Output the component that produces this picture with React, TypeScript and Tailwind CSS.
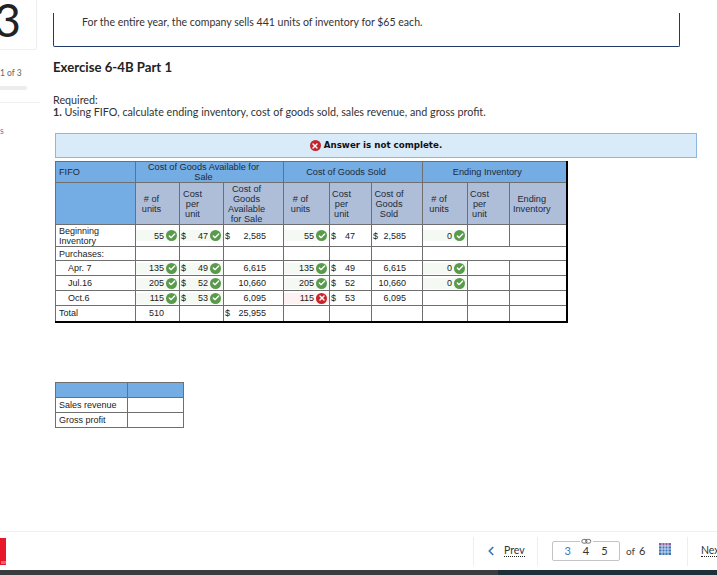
import { Check, X, ChevronLeft } from 'lucide-react';

const th = 'border border-[#6f6f6f] font-normal text-center leading-[10px] align-middle p-0';
const td = 'border border-[#6f6f6f] p-0 align-middle text-[#222] leading-[10px] text-[9px]';
const heavy = 'border-l-black';

function Ok() {
  return (
    <span className="inline-flex h-[11px] w-[11px] shrink-0 items-center justify-center rounded-full bg-[#5a9a4c]">
      <Check className="h-[8px] w-[8px] text-white" strokeWidth={4} />
    </span>
  );
}

function Bad() {
  return (
    <span className="inline-flex h-[11px] w-[11px] shrink-0 items-center justify-center rounded-full bg-[#c5242c]">
      <X className="h-[8px] w-[8px] text-white" strokeWidth={4} />
    </span>
  );
}

function Units({ n, bad }: { n: string; bad?: boolean }) {
  return (
    <div className={`flex h-full items-center justify-end gap-[2px] pr-[2px] ${bad ? 'bg-[#fdf1f1]' : 'bg-[#f5f9f3]'}`}>
      <span>{n}</span>
      {bad ? <Bad /> : <Ok />}
    </div>
  );
}

function Cost({ n, ok }: { n: string; ok?: boolean }) {
  return (
    <div className={`flex h-full items-center gap-[2px] pl-[1px] pr-[2px] ${ok ? 'bg-[#f5f9f3]' : ''}`}>
      <span>$</span>
      <span className={ok ? 'ml-auto' : 'ml-[7px]'}>{n}</span>
      {ok && <Ok />}
    </div>
  );
}

function Money({ n, dollar }: { n: string; dollar?: boolean }) {
  return (
    <div className="flex items-center pl-[1px] pr-[17px]">
      {dollar && <span>$</span>}
      <span className="ml-auto">{n}</span>
    </div>
  );
}

const rows = [
  { label: 'Apr. 7', n: '135', c: '49', v: '6,615', end: true },
  { label: 'Jul.16', n: '205', c: '52', v: '10,660', end: true },
  { label: 'Oct.6', n: '115', c: '53', v: '6,095', end: false },
];

function FifoTable() {
  return (
    <table className="ml-[2px] mt-[3px] w-[511px] table-fixed border-collapse border-b-2 border-r-2 border-b-black border-r-black font-['Liberation_Sans',sans-serif] text-[9.2px] text-[#222]">
      <colgroup>
        <col className="w-[80px]" />
        <col className="w-[44px]" />
        <col className="w-[44px]" />
        <col className="w-[60px]" />
        <col className="w-[46px]" />
        <col className="w-[42px]" />
        <col className="w-[51px]" />
        <col className="w-[45px]" />
        <col className="w-[42px]" />
        <col className="w-[57px]" />
      </colgroup>
      <thead>
        <tr className="h-[20px] bg-[#74ace4] text-[#1f2a36]">
          <th className={`${th} pl-[3px] text-left`}>FIFO</th>
          <th colSpan={3} className={`${th} ${heavy} pl-[8px] pr-[20px]`}>Cost of Goods Available for Sale</th>
          <th colSpan={3} className={`${th} ${heavy} pr-[14px]`}>Cost of Goods Sold</th>
          <th colSpan={3} className={`${th} ${heavy} pr-[14px]`}>Ending Inventory</th>
        </tr>
        <tr className="h-[42px] bg-[#aebdd8] text-[#1f2a36]">
          <th className={`${th} bg-[#74ace4]`}></th>
          <th className={`${th} ${heavy}`}><div className="pr-[12px]"># of<br />units</div></th>
          <th className={th}><div className="pr-[18px]">Cost<br />per<br />unit</div></th>
          <th className={th}><div className="pr-[14px]">Cost of<br />Goods<br />Available<br />for Sale</div></th>
          <th className={`${th} ${heavy}`}><div className="pr-[12px]"># of<br />units</div></th>
          <th className={th}><div className="pr-[18px]">Cost<br />per<br />unit</div></th>
          <th className={th}><div className="pr-[16px]">Cost of<br />Goods<br />Sold</div></th>
          <th className={`${th} ${heavy}`}><div className="pr-[12px]"># of<br />units</div></th>
          <th className={th}><div className="pr-[18px]">Cost<br />per<br />unit</div></th>
          <th className={th}><div className="pr-[12px]">Ending<br />Inventory</div></th>
        </tr>
      </thead>
      <tbody>
        <tr className="h-[22px] border-t border-t-black">
          <td className={`${td} pl-[3px]`}>Beginning<br />Inventory</td>
          <td className={`${td} ${heavy}`}><Units n="55" /></td>
          <td className={td}><Cost n="47" ok /></td>
          <td className={td}><Money n="2,585" dollar /></td>
          <td className={`${td} ${heavy}`}><Units n="55" /></td>
          <td className={td}><Cost n="47" /></td>
          <td className={td}><div className="flex pl-[1px] pr-[16px]"><span>$</span><span className="ml-auto">2,585</span></div></td>
          <td className={`${td} ${heavy}`}><Units n="0" /></td>
          <td className={td}></td>
          <td className={td}></td>
        </tr>
        <tr className="h-[14px]">
          <td className={`${td} pl-[3px]`}>Purchases:</td>
          <td className={`${td} ${heavy}`}></td>
          <td className={td}></td>
          <td className={td}></td>
          <td className={`${td} ${heavy}`}></td>
          <td className={td}></td>
          <td className={td}></td>
          <td colSpan={3} className={`${td} ${heavy}`}></td>
        </tr>
        {rows.map((r) => (
          <tr key={r.label} className="h-[15px]">
            <td className={`${td} pl-[12px]`}>{r.label}</td>
            <td className={`${td} ${heavy}`}><Units n={r.n} /></td>
            <td className={td}><Cost n={r.c} ok /></td>
            <td className={td}><Money n={r.v} /></td>
            <td className={`${td} ${heavy}`}><Units n={r.n} bad={!r.end} /></td>
            <td className={td}><Cost n={r.c} /></td>
            <td className={td}><div className="pr-[16px] text-right">{r.v}</div></td>
            <td className={`${td} ${heavy}`}>{r.end && <Units n="0" />}</td>
            <td className={td}></td>
            <td className={td}></td>
          </tr>
        ))}
        <tr className="h-[16px] border-t border-t-black">
          <td className={`${td} pl-[3px]`}>Total</td>
          <td className={`${td} ${heavy} pl-[13px]`}>510</td>
          <td className={td}></td>
          <td className={td}><Money n="25,955" dollar /></td>
          <td className={`${td} ${heavy}`}></td>
          <td className={td}></td>
          <td className={td}></td>
          <td className={`${td} ${heavy}`}></td>
          <td className={td}></td>
          <td className={td}></td>
        </tr>
      </tbody>
    </table>
  );
}

function Sidebar() {
  return (
    <div className="w-[53px] shrink-0 overflow-hidden">
      <div className="ml-[-10px] mt-[-10px] flex h-[60px] w-[47px] items-center justify-end rounded-[3px] border border-[#eeeeee] pr-[15px] text-[46px] leading-none text-[#222]">
        3
      </div>
      <div className="mt-[18px] text-[8.5px] leading-[10px] text-[#666]">1 of 3</div>
      <div className="mt-[8px] h-[4px] w-[27px] rounded-r-full bg-[#ececec]"></div>
      <div className="mt-[12px] h-px w-[40px] bg-[#eeeeee]"></div>
      <div className="mt-[23px] text-[8.5px] leading-[10px] text-[#5b7a9c]">s</div>
    </div>
  );
}

function Footer() {
  return (
    <div className="flex h-[39px] shrink-0 items-center border-t border-[#f0f0f0]">
      <div className="flex h-[27px] w-[473px] items-center">
        <div className="flex h-[27px] w-[6px] items-end justify-center bg-[#e8182a] pb-[1px]">
          <div className="h-[3px] w-[5px] bg-[#f0606c]"></div>
        </div>
      </div>
      <div className="flex h-[29px] w-[64px] items-center border-l border-[#eeeeee] pl-[10px]">
        <ChevronLeft className="h-[14px] w-[14px] text-[#3b76b8]" strokeWidth={3} />
        <span className="ml-[6px] border-b border-dotted border-[#222] text-[10.5px] leading-[11px] text-[#333]">Prev</span>
      </div>
      <div className="flex h-[29px] w-[150px] items-center border-l border-[#eeeeee] pl-[14px]">
        <div className="relative flex h-[20px] w-[68px] items-center justify-center gap-[12px] rounded-[2px] border border-[#c4c4c4] text-[11px]">
          <svg className="absolute left-[27px] top-[-4px] bg-white px-[1px]" width="13" height="7" viewBox="0 0 13 7" fill="none" stroke="#555" strokeWidth="1">
            <rect x="1" y="1" width="6" height="4.5" rx="2.2" />
            <rect x="5.5" y="1" width="6" height="4.5" rx="2.2" />
          </svg>
          <span className="text-[#3b76b8]">3</span>
          <span className="text-[#333]">4</span>
          <span className="text-[#333]">5</span>
        </div>
        <span className="ml-[6px] text-[10px] text-[#444]">of</span>
        <span className="ml-[4px] text-[11px] text-[#333]">6</span>
        <svg className="mb-[4px] ml-[14px]" width="12" height="12" viewBox="0 0 12 12">
          <rect width="12" height="12" fill="#3f74b8" />
          <rect y="0" width="12" height="3" fill="#8a5fa0" />
          <path d="M3 0V12M6 0V12M9 0V12M0 3H12M0 6H12M0 9H12" stroke="#ffffff" strokeWidth="0.7" />
        </svg>
      </div>
      <div className="flex h-[29px] flex-1 items-center overflow-hidden border-l border-[#eeeeee] pl-[13px]">
        <span className="border-b border-dotted border-[#222] text-[10.5px] leading-[11px] text-[#333]">Next</span>
      </div>
    </div>
  );
}

export default function App() {
  return (
    <div className="flex h-[575px] w-[717px] flex-col overflow-hidden bg-white font-['Lato','Open_Sans',sans-serif] text-[#333]">
      <div className="flex h-[531px] shrink-0">
        <Sidebar />
        <div className="min-w-0 flex-1">
          <div className="mt-[13px] h-[34px] w-[627px] rounded-b-[2px] border-x border-b border-[#1f3a68] pl-[28px] pt-[3px] text-[10.55px] leading-[13px]">
            For the entire year, the company sells 441 units of inventory for $65 each.
          </div>
          <h2 className="mt-[13px] text-[13.2px] font-bold leading-[14px] text-[#222]">Exercise 6-4B Part 1</h2>
          <div className="mt-[20px] text-[10.75px] leading-[12px]">
            <div>Required:</div>
            <div><b>1.</b> Using FIFO, calculate ending inventory, cost of goods sold, sales revenue, and gross profit.</div>
          </div>
          <div className="ml-[2px] mt-[15px] flex h-[25px] w-[642px] items-center justify-center border border-[#8fb6de] bg-[#d9eaf9] font-['DejaVu_Sans',sans-serif] text-[8.7px] font-bold text-[#111]">
            <Bad />
            <span className="ml-[3px]">Answer is not complete.</span>
          </div>
          <FifoTable />
          <table className="ml-[2px] mt-[59px] w-[128px] table-fixed border-collapse font-['Liberation_Sans',sans-serif] text-[9px]">
            <colgroup>
              <col className="w-[72px]" />
              <col className="w-[56px]" />
            </colgroup>
            <tbody>
              <tr className="h-[15px] bg-[#74ace4]">
                <td className={td}></td>
                <td className={td}></td>
              </tr>
              <tr className="h-[15px]">
                <td className={`${td} pl-[3px]`}>Sales revenue</td>
                <td className={td}></td>
              </tr>
              <tr className="h-[15px]">
                <td className={`${td} pl-[3px]`}>Gross profit</td>
                <td className={td}></td>
              </tr>
            </tbody>
          </table>
        </div>
      </div>
      <Footer />
      <div className="flex h-[5px] shrink-0">
        <div className="w-[498px] bg-[#3a3d3f]"></div>
        <div className="flex-1 bg-[#1d2f38]"></div>
      </div>
    </div>
  );
}
